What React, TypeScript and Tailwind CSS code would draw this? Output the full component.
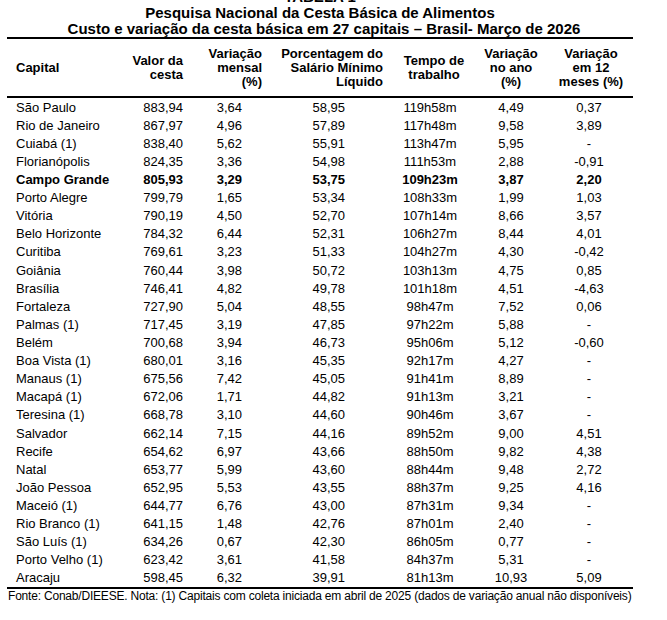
import React from 'react';

const rows: string[][] = [
  ['São Paulo', '883,94', '3,64', '58,95', '119h58m', '4,49', '0,37'],
  ['Rio de Janeiro', '867,97', '4,96', '57,89', '117h48m', '9,58', '3,89'],
  ['Cuiabá (1)', '838,40', '5,62', '55,91', '113h47m', '5,95', '-'],
  ['Florianópolis', '824,35', '3,36', '54,98', '111h53m', '2,88', '-0,91'],
  ['Campo Grande', '805,93', '3,29', '53,75', '109h23m', '3,87', '2,20'],
  ['Porto Alegre', '799,79', '1,65', '53,34', '108h33m', '1,99', '1,03'],
  ['Vitória', '790,19', '4,50', '52,70', '107h14m', '8,66', '3,57'],
  ['Belo Horizonte', '784,32', '6,44', '52,31', '106h27m', '8,44', '4,01'],
  ['Curitiba', '769,61', '3,23', '51,33', '104h27m', '4,30', '-0,42'],
  ['Goiânia', '760,44', '3,98', '50,72', '103h13m', '4,75', '0,85'],
  ['Brasília', '746,41', '4,82', '49,78', '101h18m', '4,51', '-4,63'],
  ['Fortaleza', '727,90', '5,04', '48,55', '98h47m', '7,52', '0,06'],
  ['Palmas (1)', '717,45', '3,19', '47,85', '97h22m', '5,88', '-'],
  ['Belém', '700,68', '3,94', '46,73', '95h06m', '5,12', '-0,60'],
  ['Boa Vista (1)', '680,01', '3,16', '45,35', '92h17m', '4,27', '-'],
  ['Manaus (1)', '675,56', '7,42', '45,05', '91h41m', '8,89', '-'],
  ['Macapá (1)', '672,06', '1,71', '44,82', '91h13m', '3,21', '-'],
  ['Teresina (1)', '668,78', '3,10', '44,60', '90h46m', '3,67', '-'],
  ['Salvador', '662,14', '7,15', '44,16', '89h52m', '9,00', '4,51'],
  ['Recife', '654,62', '6,97', '43,66', '88h50m', '9,82', '4,38'],
  ['Natal', '653,77', '5,99', '43,60', '88h44m', '9,48', '2,72'],
  ['João Pessoa', '652,95', '5,53', '43,55', '88h37m', '9,25', '4,16'],
  ['Maceió (1)', '644,77', '6,76', '43,00', '87h31m', '9,34', '-'],
  ['Rio Branco (1)', '641,15', '1,48', '42,76', '87h01m', '2,40', '-'],
  ['São Luís (1)', '634,26', '0,67', '42,30', '86h05m', '0,77', '-'],
  ['Porto Velho (1)', '623,42', '3,61', '41,58', '84h37m', '5,31', '-'],
  ['Aracaju', '598,45', '6,32', '39,91', '81h13m', '10,93', '5,09'],
];

const cols = 'grid grid-cols-[113px_66px_78px_121px_90px_72px_86px]';

const App: React.FC = () => {
  return (
    <div className="min-h-screen bg-white text-black font-['Liberation_Sans',Arial,sans-serif] overflow-hidden">
      <div className="ml-[7px] w-[626px]">
        {/* Title */}
        <div className="-mt-[11px] text-center font-bold text-[15px] leading-[16px]">
          <div>TABELA 1</div>
          <div>Pesquisa Nacional da Cesta Básica de Alimentos</div>
          <div className="pl-[8px]">Custo e variação da cesta básica em 27 capitais – Brasil- Março de 2026</div>
        </div>

        {/* Table */}
        <div className="border-t-2 border-b-2 border-black">
          <div className={`${cols} h-[59px] items-center border-b-2 border-black font-bold text-[13px] leading-[14px]`}>
            <div className="pl-[9px]">Capital</div>
            <div className="text-right pr-[3px]">Valor da<br />cesta</div>
            <div className="text-right pr-[2px]">Variação<br />mensal<br />(%)</div>
            <div className="text-right pr-[2px]">Porcentagem do<br />Salário Mínimo<br />Líquido</div>
            <div className="text-center pl-[8px]">Tempo de<br />trabalho</div>
            <div className="text-center">Variação<br />no ano<br />(%)</div>
            <div className="text-center pl-[2px]">Variação<br />em 12<br />meses (%)</div>
          </div>
          {rows.map((r) => {
            const bold = r[0] === 'Campo Grande';
            return (
              <div
                key={r[0]}
                className={`${cols} h-[18.12px] items-center text-[13px] leading-[15px] ${bold ? 'font-bold' : ''}`}
              >
                <div className="pl-[9px] whitespace-nowrap">{r[0]}</div>
                <div className="text-right pr-[3px]">{r[1]}</div>
                <div className="text-right pr-[22px]">{r[2]}</div>
                <div className="text-right pr-[40px]">{r[3]}</div>
                <div className="text-center">{r[4]}</div>
                <div className="text-center">{r[5]}</div>
                <div className="text-center pr-[2px]">{r[6]}</div>
              </div>
            );
          })}
        </div>

        {/* Footer */}
        <div className="pl-[1px] text-[12px] leading-[14px] tracking-[-0.2px] whitespace-nowrap">
          Fonte: Conab/DIEESE. Nota: (1) Capitais com coleta iniciada em abril de 2025 (dados de variação anual não disponíveis)
        </div>
      </div>
    </div>
  );
};

export default App;
